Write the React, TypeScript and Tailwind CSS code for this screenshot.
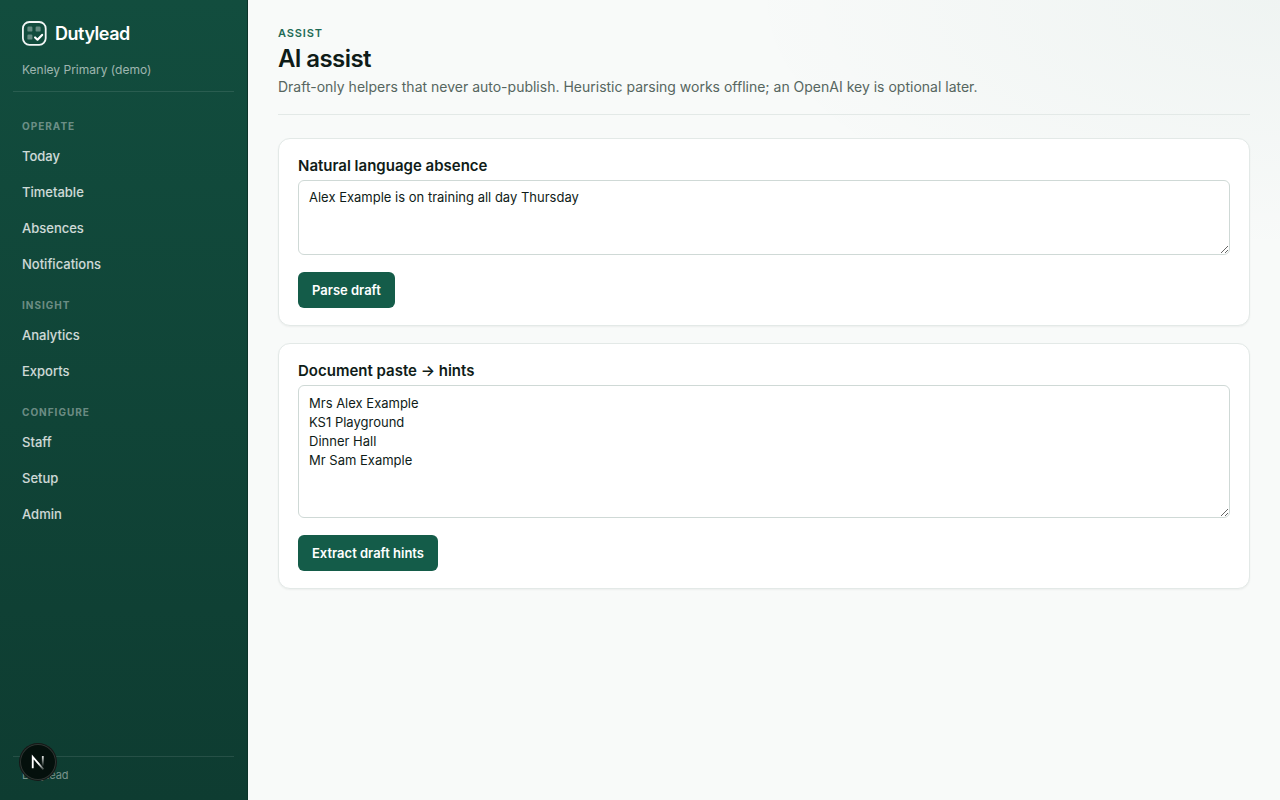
import React, { useState } from 'react'

interface NavGroup {
  title: string;
  items: string[];
}

const navGroups: NavGroup[] = [
  { title: "Operate", items: ["Today", "Timetable", "Absences", "Notifications"] },
  { title: "Insight", items: ["Analytics", "Exports"] },
  { title: "Configure", items: ["Staff", "Setup", "Admin"] },
];

const Logo = () => (
  <svg className="h-[26px] w-[25px]" viewBox="0 0 25 26" fill="none" aria-hidden="true">
    <rect x="0.9" y="1" width="22.8" height="22.8" rx="6.5" stroke="white" strokeOpacity="0.95" strokeWidth="1.8" />
    <rect x="5.4" y="5.6" width="5" height="5" rx="1.2" fill="white" fillOpacity="0.35" />
    <rect x="13.6" y="5.6" width="5" height="5" rx="1.2" fill="white" fillOpacity="0.35" />
    <rect x="5.4" y="13.6" width="5" height="5" rx="1.2" fill="white" fillOpacity="0.35" />
    <path d="M13.1 16.5l2.4 2.2 4.6-4.8" stroke="white" strokeWidth="2.2" strokeLinecap="round" strokeLinejoin="round" />
  </svg>
);

const Sidebar = () => (
  <aside className="flex w-[248px] shrink-0 flex-col border-r border-[#0b3329] bg-linear-to-b from-[#124d3e] to-[#0e3c31] px-[13px] pt-5 pb-4">
    <div className="border-b border-white/10 px-[9px] pb-3">
      <a href="#" className="flex items-center gap-2 text-white">
        <Logo />
        <span className="text-lg leading-7 font-semibold tracking-tight">Dutylead</span>
      </a>
      <p className="mt-[13px] text-xs leading-[18px] text-white/60">Kenley Primary (demo)</p>
    </div>

    <nav className="mt-[27px] flex flex-col gap-[17px]">
      {navGroups.map((group) => (
        <div key={group.title}>
          <h2 className="px-[9px] text-[10px] leading-[14px] font-bold tracking-widest text-white/40 uppercase">
            {group.title}
          </h2>
          <ul className="mt-1.5 flex flex-col gap-[2px]">
            {group.items.map((item) => (
              <li key={item}>
                <a
                  href="#"
                  className="block rounded-md px-[9px] py-2 text-[13px] leading-[18px] font-medium text-white/80 hover:bg-white/10"
                >
                  {item}
                </a>
              </li>
            ))}
          </ul>
        </div>
      ))}
    </nav>

    <div className="mt-auto border-t border-white/10 px-[9px] pt-2.5">
      <p className="text-[11px] leading-[17px] text-white/45">Dutylead</p>
    </div>
  </aside>
);

interface DraftCardProps {
  id: string;
  title: string;
  action: string;
  initial: string;
  fieldClass: string;
}

const DraftCard: React.FC<DraftCardProps> = ({ id, title, action, initial, fieldClass }) => {
  const [text, setText] = useState(initial)

  return (
    <section className="rounded-xl border border-[#e3e9e7] bg-white px-[19px] py-[17px] shadow-xs">
      <label htmlFor={id} className="block text-[15px] leading-5 font-semibold text-[#0f1c18]">
        {title}
      </label>
      <textarea
        id={id}
        value={text}
        onChange={(e) => setText(e.target.value)}
        className={`mt-1 block w-full resize-y rounded-md border border-[#cfd9d6] bg-white px-2.5 py-2 text-[13px] text-[#0f1c18] outline-none ${fieldClass}`}
      />
      <button
        type="button"
        className="mt-[17px] block h-9 rounded-md bg-[#145c49] px-3.5 text-[13px] leading-5 font-semibold text-white hover:bg-[#0f4a3a]"
      >
        {action}
      </button>
    </section>
  );
};

// dev tools badge, floats over the sidebar footer
const DevBadge = () => (
  <button
    type="button"
    aria-label="Open dev tools"
    className="fixed bottom-5 left-5 flex h-9 w-9 items-center justify-center rounded-full bg-[#04100c] shadow-[0_0_0_1px_#171717,inset_0_0_0_1px_#2e3532]"
  >
    <svg width="16" height="16" viewBox="0 0 14 14" fill="none">
      <defs>
        <linearGradient id="nDiag" x1="8" y1="8" x2="12.5" y2="14" gradientUnits="userSpaceOnUse">
          <stop stopColor="white" />
          <stop offset="1" stopColor="white" stopOpacity="0.1" />
        </linearGradient>
        <linearGradient id="nStem" x1="11.2" y1="1" x2="11.2" y2="11" gradientUnits="userSpaceOnUse">
          <stop stopColor="white" />
          <stop offset="1" stopColor="white" stopOpacity="0" />
        </linearGradient>
      </defs>
      <path d="M2.4 12.4V2.6L11.8 13.4" stroke="url(#nDiag)" strokeWidth="1.6" />
      <path d="M11.2 1.8v9" stroke="url(#nStem)" strokeWidth="1.6" />
    </svg>
  </button>
);

export default function App() {
  return (
    <div className="flex min-h-screen bg-[#f8faf9] font-['Inter',sans-serif] text-[#0f1c18]">
      <Sidebar />
      <main className="min-w-0 flex-1 bg-[radial-gradient(ellipse_900px_420px_at_100%_0%,rgba(20,92,73,0.04),transparent_60%)] px-[30px] pt-[25px] pb-10">
        <header className="border-b border-[#e3e9e7] pb-[17px]">
          <p className="text-[11px] leading-4 font-semibold tracking-[0.08em] text-[#1f6b55] uppercase">Assist</p>
          <h1 className="mt-1 text-2xl leading-[28px] font-semibold tracking-tight">AI assist</h1>
          <p className="mt-[3px] text-sm leading-[21px] text-[#566660]">
            Draft-only helpers that never auto-publish. Heuristic parsing works offline; an OpenAI key is optional later.
          </p>
        </header>

        <div className="mt-[23px] flex flex-col gap-[17px]">
          <DraftCard
            id="absence"
            title="Natural language absence"
            action="Parse draft"
            initial="Alex Example is on training all day Thursday"
            fieldClass="h-[75px] leading-4"
          />
          <DraftCard
            id="document"
            title="Document paste → hints"
            action="Extract draft hints"
            initial={"Mrs Alex Example\nKS1 Playground\nDinner Hall\nMr Sam Example"}
            fieldClass="h-[133px] leading-[19px]"
          />
        </div>
      </main>
      <DevBadge />
    </div>
  );
}
